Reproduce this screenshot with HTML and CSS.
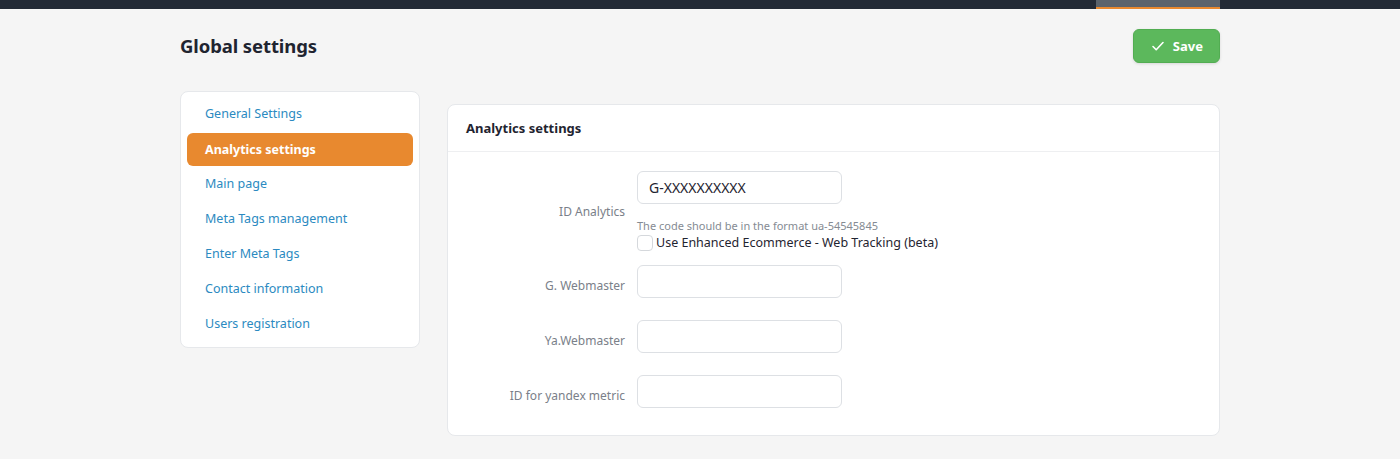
FILE: index.html
```html
<!DOCTYPE html>
<html lang="en">

<head>
    <meta charset="UTF-8" />
    <title>Global settings</title>
    <link rel="stylesheet" href="styles.css">
</head>

<body>
    <div class="topbar">
        <div class="topbar-inner">
            <span class="topbar-tab"></span>
        </div>
    </div>

    <div class="container">
        <div class="page-head">
            <h1>Global settings</h1>
            <button class="save-btn">
                <svg width="14" height="14" viewBox="0 0 14 14"><path d="M2 7.5l3.2 3.2L12 3.5" fill="none" stroke="#fff" stroke-width="1.6" stroke-linecap="round" stroke-linejoin="round"/></svg>
                Save
            </button>
        </div>

        <div class="layout">
            <div class="side-menu">
                <a href="#">General Settings</a>
                <a href="#" class="active">Analytics settings</a>
                <a href="#">Main page</a>
                <a href="#">Meta Tags management</a>
                <a href="#">Enter Meta Tags</a>
                <a href="#">Contact information</a>
                <a href="#">Users registration</a>
            </div>

            <div class="card">
                <div class="card-head">Analytics settings</div>
                <div class="card-body">
                    <div class="form-row">
                        <label class="form-label">ID Analytics</label>
                        <div class="form-field">
                            <input type="text" class="text-input" value="G-XXXXXXXXXX">
                            <div class="help">The code should be in the format ua-54545845</div>
                            <label class="check"><span class="box"></span>Use Enhanced Ecommerce - Web Tracking (beta)</label>
                        </div>
                    </div>
                    <div class="form-row">
                        <label class="form-label low">G. Webmaster</label>
                        <div class="form-field"><input type="text" class="text-input"></div>
                    </div>
                    <div class="form-row">
                        <label class="form-label low">Ya.Webmaster</label>
                        <div class="form-field"><input type="text" class="text-input"></div>
                    </div>
                    <div class="form-row">
                        <label class="form-label low">ID for yandex metric</label>
                        <div class="form-field"><input type="text" class="text-input"></div>
                    </div>
                </div>
            </div>
        </div>
    </div>
</body>

</html>
```

FILE: styles.css
```css
body {
    font-family: 'Noto Sans', 'Open Sans', sans-serif;
    background-color: #f5f5f5;
    color: #1f2430;
    margin: 0;
    padding: 0;
}

.topbar {
    background-color: #232a36;
    height: 9px;
}

.topbar-inner {
    width: 1040px;
    margin: 0 auto;
    display: flex;
    justify-content: flex-end;
}

.topbar-tab {
    width: 124px;
    height: 7px;
    background-color: #5b636c;
    border-bottom: 2px solid #e8892f;
}

.container {
    width: 1040px;
    margin: 0 auto;
}

.page-head {
    display: flex;
    justify-content: space-between;
    align-items: center;
    padding-top: 20px;
    height: 34px;
}

.page-head h1 {
    margin: 0 0 2px 0;
    font-size: 18.5px;
    font-weight: 700;
    letter-spacing: -0.1px;
}

.save-btn {
    display: flex;
    align-items: center;
    gap: 8px;
    height: 34px;
    padding: 0 16px 0 17px;
    background-color: #5cb85c;
    border: 1px solid #52ad52;
    border-radius: 6px;
    color: white;
    font-family: inherit;
    font-size: 13px;
    font-weight: 700;
    box-shadow: 0 1px 3px rgba(0, 0, 0, 0.12);
}

.layout {
    display: flex;
    align-items: flex-start;
    gap: 27px;
    margin-top: 28px;
}

.side-menu {
    box-sizing: border-box;
    width: 240px;
    flex-shrink: 0;
    background-color: white;
    border: 1px solid #e6e8eb;
    border-radius: 8px;
    padding: 5px 6px;
}

.side-menu a {
    display: block;
    height: 35px;
    line-height: 34px;
    padding: 0 18px;
    border-radius: 6px;
    color: #2b8ac1;
    text-decoration: none;
    font-size: 12.5px;
}

.side-menu a.active {
    background-color: #e8892f;
    color: white;
    font-weight: 700;
    height: 33px;
    line-height: 33px;
    margin: 1px 0;
}

.card {
    flex: 1;
    margin-top: 13px;
    background-color: white;
    border: 1px solid #e6e8eb;
    border-radius: 8px;
}

.card-head {
    height: 46px;
    line-height: 46px;
    padding: 0 18px;
    font-size: 13px;
    font-weight: 700;
    border-bottom: 1px solid #eeeff1;
}

.card-body {
    padding: 19px 20px 27px 20px;
}

.form-row {
    display: grid;
    grid-template-columns: 157px 205px;
    column-gap: 12px;
    align-items: center;
    margin-bottom: 22px;
}

.form-row:first-child {
    margin-bottom: 14px;
}

.form-row:last-child {
    margin-bottom: 0;
}

.form-label {
    text-align: right;
    font-size: 12px;
    color: #7a8089;
}

.form-label.low {
    padding-top: 7px;
}

.text-input {
    box-sizing: border-box;
    display: block;
    width: 205px;
    height: 33px;
    border: 1px solid #dde0e4;
    border-radius: 6px;
    padding: 0 11px;
    font-family: inherit;
    font-size: 14px;
    color: #1f2430;
}

.help {
    font-size: 11px;
    color: #858b93;
    margin-top: 14px;
    white-space: nowrap;
}

.check {
    display: flex;
    align-items: center;
    gap: 3px;
    font-size: 12.5px;
    color: #1f2430;
    white-space: nowrap;
    margin-top: 1px;
}

.box {
    display: block;
    flex-shrink: 0;
    box-sizing: border-box;
    width: 16px;
    height: 16px;
    border: 1px solid #d5d8dc;
    border-radius: 4px;
    background-color: white;
}
```
